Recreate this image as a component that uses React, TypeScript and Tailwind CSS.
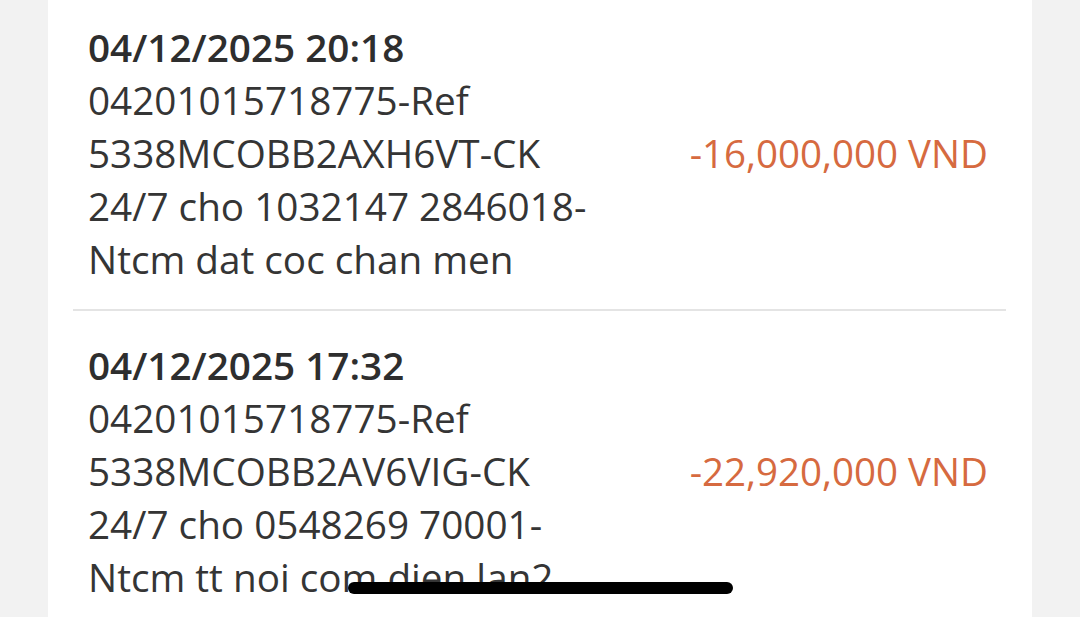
const rows = [
  {
    date: "04/12/2025 20:18",
    lines: [
      "04201015718775-Ref",
      "5338MCOBB2AXH6VT-CK",
      "24/7 cho 1032147 2846018-",
      "Ntcm dat coc chan men",
    ],
    amount: "-16,000,000 VND",
  },
  {
    date: "04/12/2025 17:32",
    lines: [
      "04201015718775-Ref",
      "5338MCOBB2AV6VIG-CK",
      "24/7 cho 0548269 70001-",
      "Ntcm tt noi com dien lan2",
    ],
    amount: "-22,920,000 VND",
  },
];

export default function App() {
  return (
    <div
      className="relative h-[617px] w-[1080px] overflow-hidden bg-[#f2f2f2]"
      style={{ fontFamily: '"Open Sans", "Noto Sans", sans-serif' }}
    >
      <div className="mx-[48px] h-full w-[984px] bg-white pl-[25px] pr-[26px]">
        {rows.map((row, i) => (
          <div
            key={i}
            className={
              i === 0
                ? "flex items-center justify-between border-b-2 border-[#e4e4e4] pb-[23px] pl-[15px] pr-[18px] pt-[21px]"
                : "flex items-center justify-between pl-[15px] pr-[18px] pt-[28px]"
            }
          >
            <div className="text-[38.7px] leading-[53px] text-[#353535]">
              <div className="font-semibold text-[#2e2e2e]">{row.date}</div>
              {row.lines.map((l, j) => (
                <div key={j}>{l}</div>
              ))}
            </div>
            <div className="text-[38.5px] leading-[53px] text-[#d66a40]">
              {row.amount}
            </div>
          </div>
        ))}
      </div>
      <div className="absolute left-[348px] top-[582px] h-[12px] w-[385px] rounded-full bg-black" />
    </div>
  );
}
